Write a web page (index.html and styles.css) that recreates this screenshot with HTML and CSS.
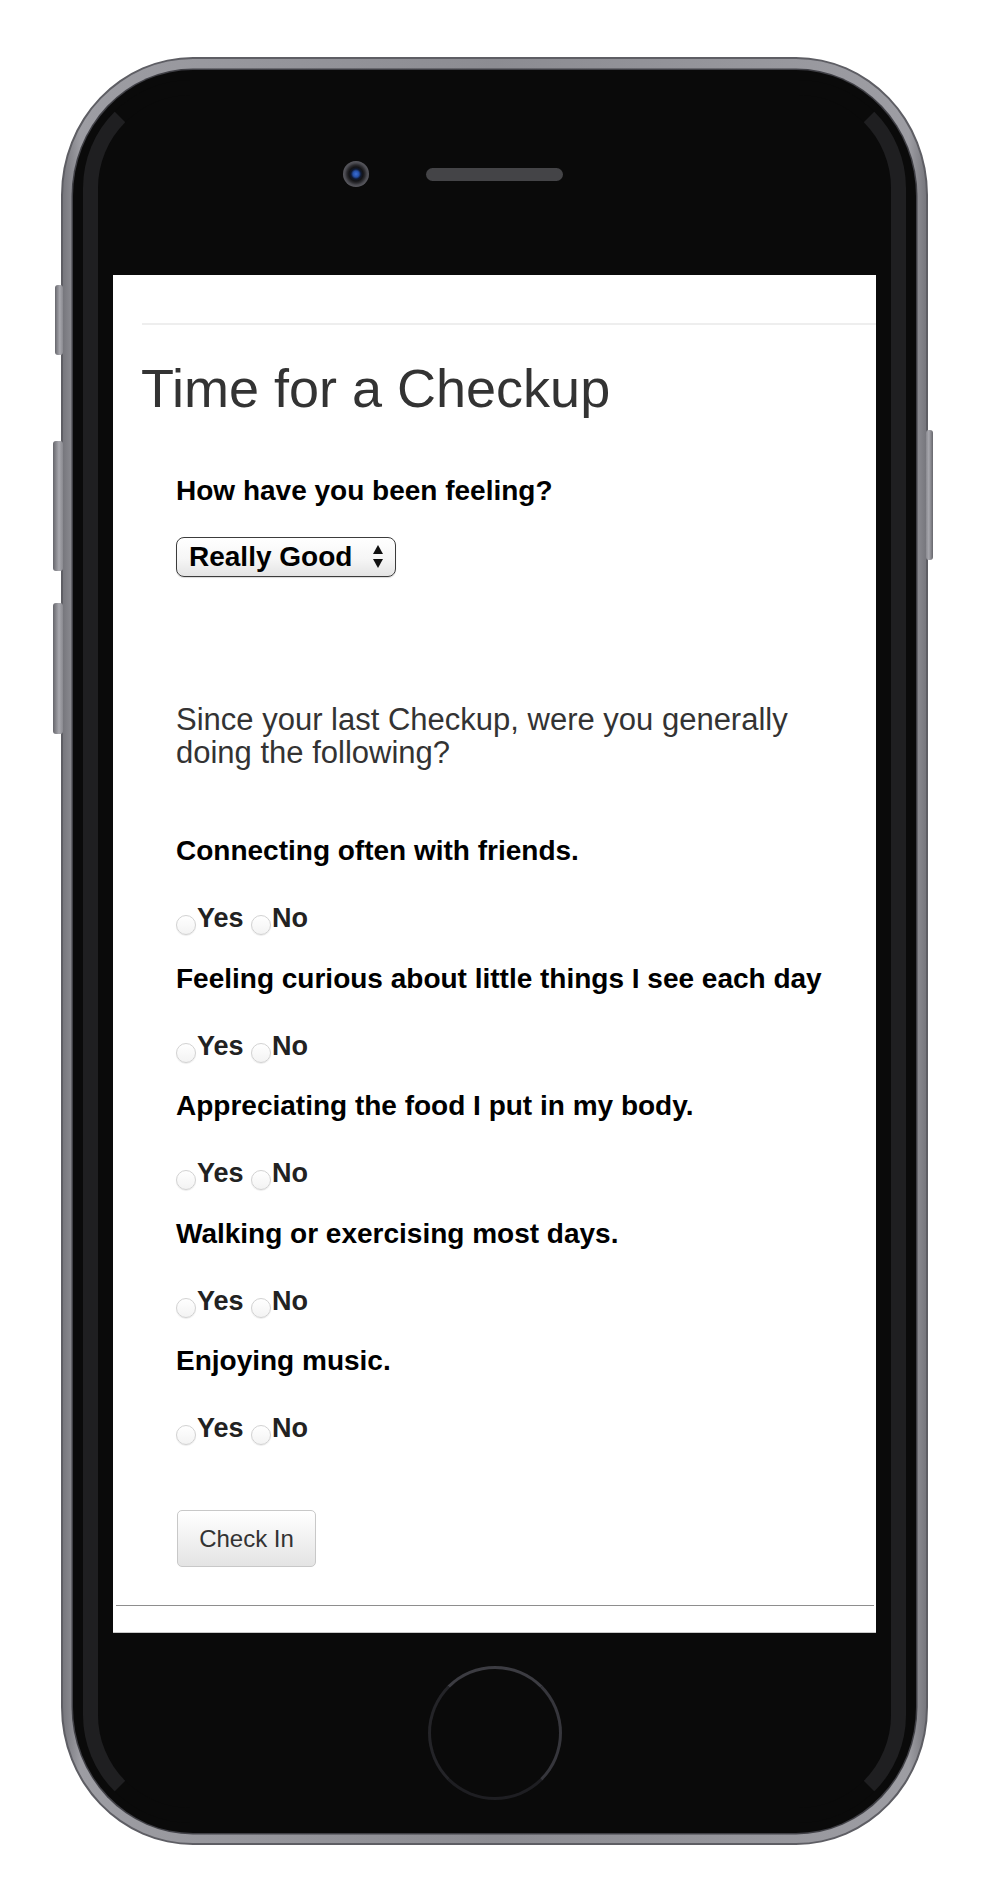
FILE: index.html
```html
<!DOCTYPE html>
<html lang="en">
<head>
<meta charset="utf-8">
<title>Time for a Checkup</title>
<link rel="stylesheet" href="styles.css">
</head>
<body>
<div class="page">
  <div class="phone">
    <span class="side-btn mute"></span>
    <span class="side-btn vol-up"></span>
    <span class="side-btn vol-down"></span>
    <span class="side-btn power"></span>
    <div class="bezel">
      <div class="glass">
        <div class="earpiece-row">
          <span class="camera"></span>
          <span class="speaker"></span>
          <span class="spacer"></span>
        </div>
        <div class="screen">
          <hr class="rule-top">
          <h1 class="title">Time for a Checkup</h1>
          <form class="checkup">
            <p class="q-label first">How have you been feeling?</p>
            <div class="select">
              <span class="select-value">Really Good</span>
              <svg class="select-arrows" width="10" height="24" viewBox="0 0 10 24"><path d="M0 9 L5 0 L10 9 Z" fill="#111"/><path d="M0 14 L10 14 L5 23 Z" fill="#111"/></svg>
            </div>
            <p class="intro">Since your last Checkup, were you generally doing the following?</p>

            <div class="question lead">
              <p class="q-label">Connecting often with friends.</p>
              <div class="choices">
                <label><input type="radio" name="q1">Yes</label>
                <label><input type="radio" name="q1">No</label>
              </div>
            </div>
            <div class="question">
              <p class="q-label">Feeling curious about little things I see each day</p>
              <div class="choices">
                <label><input type="radio" name="q2">Yes</label>
                <label><input type="radio" name="q2">No</label>
              </div>
            </div>
            <div class="question">
              <p class="q-label">Appreciating the food I put in my body.</p>
              <div class="choices">
                <label><input type="radio" name="q3">Yes</label>
                <label><input type="radio" name="q3">No</label>
              </div>
            </div>
            <div class="question">
              <p class="q-label">Walking or exercising most days.</p>
              <div class="choices">
                <label><input type="radio" name="q4">Yes</label>
                <label><input type="radio" name="q4">No</label>
              </div>
            </div>
            <div class="question">
              <p class="q-label">Enjoying music.</p>
              <div class="choices">
                <label><input type="radio" name="q5">Yes</label>
                <label><input type="radio" name="q5">No</label>
              </div>
            </div>

            <button type="button" class="btn">Check In</button>
          </form>
          <hr class="rule-bottom">
        </div>
        <div class="home"></div>
      </div>
    </div>
  </div>
</div>
</body>
</html>
```

FILE: styles.css
```css
html, body {
  margin: 0;
  padding: 0;
  background: #ffffff;
}

body {
  font-family: "Liberation Sans", Arial, Helvetica, sans-serif;
}

.page {
  box-sizing: border-box;
  height: 1902px;
  padding: 57px 0 0 61px;
}

/* ---------- device ---------- */
.phone {
  position: relative;
  box-sizing: border-box;
  width: 867px;
  height: 1788px;
  border: 2px solid #5e5e64;
  border-radius: 132px / 138px;
  padding: 11px 10px 10px 10px;
  background: linear-gradient(90deg, #77777d 0%, #9d9da3 2%, #8c8c92 50%, #9d9da3 98%, #77777d 100%);
}

.side-btn {
  position: absolute;
  border-radius: 3px;
  background: linear-gradient(90deg, #66666c, #a8a8ae 60%, #8a8a90);
}
.side-btn.mute {
  left: -8px;
  top: 226px;
  width: 8px;
  height: 70px;
}
.side-btn.vol-up {
  left: -10px;
  top: 382px;
  width: 10px;
  height: 130px;
}
.side-btn.vol-down {
  left: -10px;
  top: 544px;
  width: 10px;
  height: 131px;
}
.side-btn.power {
  right: -7px;
  top: 371px;
  width: 7px;
  height: 130px;
  background: linear-gradient(90deg, #8a8a90, #a8a8ae 40%, #66666c);
}

.bezel {
  box-sizing: border-box;
  height: 100%;
  padding: 10px;
  background: #0a0a0a;
  border-radius: 120px / 126px;
  box-shadow: 0 0 0 1.5px #404046;
}

.glass {
  box-sizing: border-box;
  height: 100%;
  border: 15px solid;
  border-color: #0a0a0a #1f1f21;
  border-radius: 108px;
  display: flex;
  flex-direction: column;
  align-items: center;
}

.earpiece-row {
  margin-top: 66px;
  display: flex;
  align-items: center;
  gap: 57px;
}

.camera {
  width: 26px;
  height: 26px;
  border-radius: 50%;
  background: radial-gradient(circle at 50% 50%, #3b6fd6 0, #2550a8 3px, #0f1a33 5px, #141416 7px, #2a2a2e 9px, #4a4a50 11px, #5a5a60 13px);
}

.speaker {
  width: 137px;
  height: 13px;
  border-radius: 7px;
  background: #444447;
}

.spacer {
  width: 26px;
  height: 26px;
}

.screen {
  box-sizing: border-box;
  margin-top: 88px;
  width: 763px;
  height: 1358px;
  background: #ffffff;
  overflow: hidden;
  border-bottom: 1px solid #c9c9c9;
}

.home {
  box-sizing: border-box;
  margin-top: 33px;
  width: 134px;
  height: 134px;
  border-radius: 50%;
  border: 3px solid;
  border-color: #3c3c42 #36363c #1e1e22 #242428;
}

/* ---------- page content ---------- */
.rule-top {
  margin: 48px 0 0 29px;
  height: 2px;
  border: 0;
  background: #eeeeee;
}

.title {
  margin: 34px 0 0 0;
  padding-left: 28px;
  font-size: 54px;
  line-height: 59px;
  font-weight: normal;
  color: #333333;
}

.checkup {
  margin: 0;
  padding: 0 40px 0 63px;
}

.q-label {
  margin: 29.5px 0 0 0;
  font-size: 28px;
  line-height: 31px;
  font-weight: bold;
  color: #000000;
  white-space: nowrap;
}

.q-label.first {
  margin-top: 57px;
}

.question.lead .q-label {
  margin-top: 66px;
}

.select {
  box-sizing: border-box;
  margin-top: 31px;
  width: 220px;
  height: 40px;
  display: flex;
  align-items: center;
  justify-content: space-between;
  padding: 0 12px 0 12px;
  border: 1.5px solid #3c3c3c;
  border-radius: 8px;
  background: linear-gradient(#ffffff 0%, #f6f6f6 55%, #e4e4e4 100%);
  box-shadow: 0 1px 1px rgba(0, 0, 0, 0.15);
  font-size: 28px;
  font-weight: bold;
  color: #000000;
}

.select-arrows {
  display: block;
}

.intro {
  margin: 126px 0 0 0;
  max-width: 640px;
  font-size: 31px;
  line-height: 33px;
  color: #333333;
}

.choices {
  margin-top: 37px;
  height: 30px;
  font-size: 27px;
  line-height: 30px;
  font-weight: bold;
  color: #222222;
  white-space: nowrap;
}

.choices input {
  -webkit-appearance: none;
  appearance: none;
  box-sizing: border-box;
  width: 20px;
  height: 20px;
  margin: 0 1px 0 0;
  border: 1px solid #d2d2d2;
  border-radius: 50%;
  background: linear-gradient(#ffffff, #f3f3f3);
  box-shadow: 0 1px 1px rgba(0, 0, 0, 0.08);
  vertical-align: -8px;
}

.btn {
  display: block;
  box-sizing: border-box;
  margin: 67px 0 0 1px;
  width: 139px;
  height: 57px;
  padding: 0;
  border: 1px solid #c8c8c8;
  border-radius: 5px;
  background: linear-gradient(#ffffff, #e4e4e4);
  font-family: "Liberation Sans", Arial, Helvetica, sans-serif;
  font-size: 24px;
  color: #333333;
}

.rule-bottom {
  margin: 38px 2px 0 3px;
  height: 1px;
  border: 0;
  background: #8e8e8e;
}
```
